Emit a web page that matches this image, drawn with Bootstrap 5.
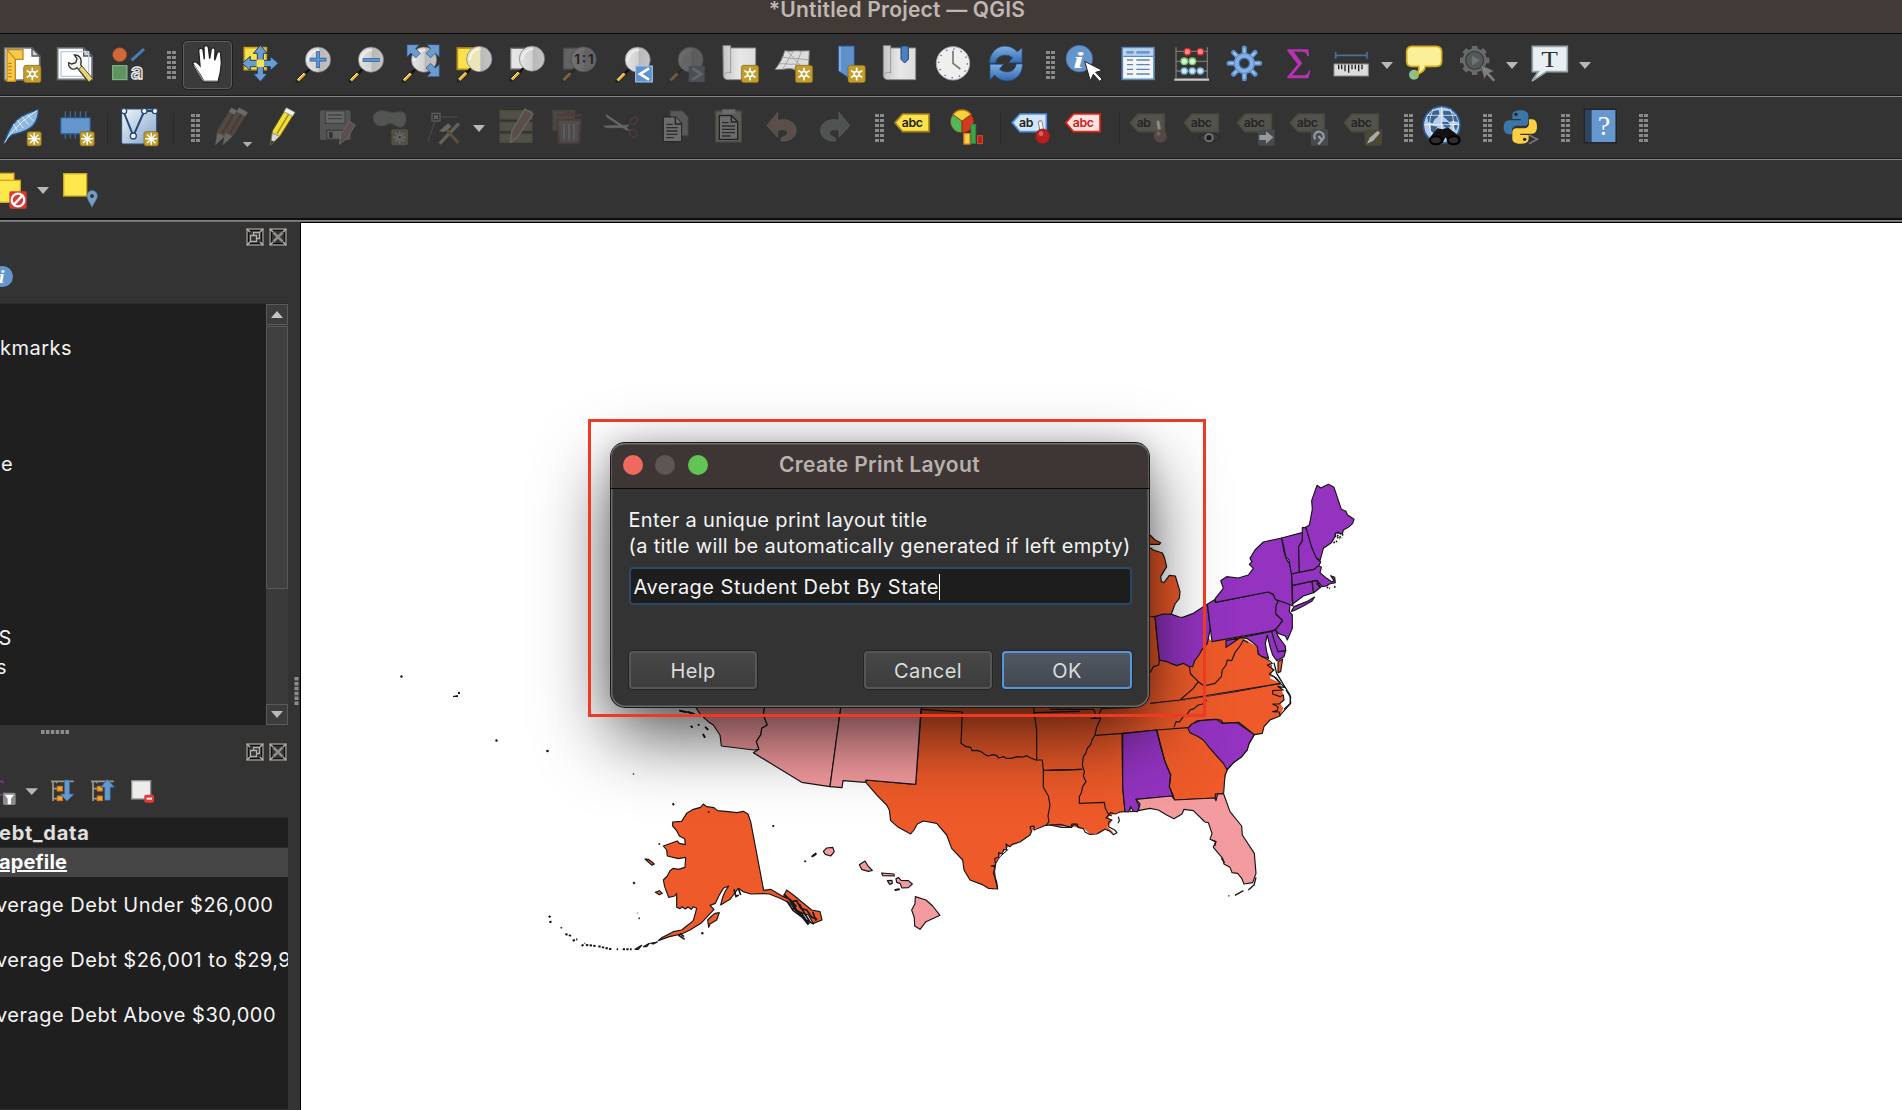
<!DOCTYPE html>
<html lang="en">
<head>
<meta charset="utf-8">
<title>*Untitled Project — QGIS</title>
<link href="https://cdn.jsdelivr.net/npm/bootstrap@5.3.0/dist/css/bootstrap.min.css" rel="stylesheet">
<script src="https://cdn.jsdelivr.net/npm/bootstrap@5.3.0/dist/js/bootstrap.bundle.min.js"></script>
<style>
  body{background:#333;color:#f4f4f4;font-family:Inter,"Liberation Sans",sans-serif;font-size:20px;width:1902px;height:1110px;overflow:hidden}
  .app-title{height:34px;background:#413a36;border-bottom:1px solid #0b0b0b;color:#c0b7b3;font-weight:600;font-size:21px;letter-spacing:.22px;line-height:20px;padding-right:108px}
  .tool-strip{height:63px;background:#333;border-bottom:1px solid #858585;box-shadow:inset 0 -1px #1c1c1c;overflow:hidden}
  .tool-strip.last-strip{height:62px;border-bottom:1px solid #6e6e6e;box-shadow:inset 0 -1px #858585,inset 0 -3px #0d0d0d}
  .slot{width:53.33px;flex:none;display:flex;justify-content:center;align-items:center;height:100%}
  .slot:first-child{margin-left:-4.7px}
  .slot>svg{width:40px;height:40px;overflow:visible;flex:none}
  .slot.active-tool{position:relative}
  .slot.active-tool::before{content:"";position:absolute;inset:7px 2px 7px 3px;border:1px solid #5c5c5c;border-radius:4px;background:#3b3b3b;outline:1px solid #1f1f1f}
  .slot.active-tool>svg{position:relative}
  .off{opacity:.3}
  .off.faint{opacity:.22}
  .grip-slot{width:25px;flex:none;padding-left:12px}
  .dots{width:10px;height:29px;background:repeating-linear-gradient(to bottom,transparent 0 3.4px,#333 3.4px 5px),repeating-linear-gradient(to right,#8a8a8a 0 3.6px,#333 3.6px 5.4px)}
  .sep-slot{width:12px;flex:none;display:flex;justify-content:center}
  .sep-slot i{width:1px;height:31px;background:#292929}
  .drop-slot{width:19px;flex:none;padding-left:2px}
  .drop-slot.wide-drop{margin-left:-12px;width:17px;padding-left:0}
  .tri{width:0;height:0;border:6.5px solid transparent;border-top:7px solid #b8b8b8;border-bottom:0}
  .tri.up{border-top:0;border-bottom:7px solid #c4c4c4}
  .side{width:300px;flex:none;background:#333}
  .map-pane{border-left:1px solid #000;border-top:1px solid #000;background:#fff}
  .tree{height:422px;background:#1f1f1f;width:288px;border-top:1px solid #292929}
  .tree-list{padding-top:30px}
  .tree-row{height:29px;line-height:29px;white-space:nowrap;letter-spacing:.5px}
  .scrollcol{width:22px;background:#3a3a3a}
  .sbtn{height:21px;border:1px solid #5a5a5a;background:#3c3c3c}
  .sthumb{height:263px;margin-top:1px;border:1.5px solid #585858;background:#404040}
  .dock-head{width:287px;gap:5px}
  .dock-first{padding-top:6px}
  .panel-btn{width:18px;height:18px}
  .info-row{height:57px;padding-top:20px}
  .layers{width:288px;height:292px;background:#1f1f1f;overflow:hidden;border-top:1px solid #2a2a2a;white-space:nowrap;letter-spacing:.5px}
  .layer-head{height:29px;line-height:30px;font-weight:700;color:#e0e0e0;letter-spacing:.75px}
  .layer-head.sel{background:#454545;color:#fff;height:30px;line-height:28px;border-top:1px solid #2b2b2b;letter-spacing:.15px}
  .layer-cls{height:55px;line-height:56px}
  .tuck{margin-left:-4px}
  .split-grip{margin-top:455px;margin-right:1px}
  .hl{position:absolute;left:588px;top:419px;width:618px;height:298px;border:3px solid #ee3a24;z-index:3}
  .dlg{position:absolute;left:611px;top:443px;width:538px;height:264px;border-radius:14px;background:#333;z-index:2;box-shadow:inset 0 0 0 1.5px #6c6a69,0 0 0 1px #1a1a1a,0 28px 72px rgba(0,0,0,.68),0 0 24px rgba(0,0,0,.16)}
  .dlg-title{height:46px;background:#3d3635;border-bottom:1px solid #0a0a0a;border-radius:14px 14px 0 0;box-shadow:inset 0 1.5px #74706f,inset 1px 0 #5c5857,inset -1px 0 #5c5857;padding:0 12px 1px;gap:12.300px}
  .dlg-title b{font-weight:600;color:#b9b1ae;font-size:21px;letter-spacing:.33px;padding-right:98px}
  .lamp{width:20px;height:20px;border-radius:50%}
  .lamp-r{background:#ee6a5f}.lamp-m{background:#5d5654}.lamp-g{background:#61c454}
  .dlg-body{padding:18px 17px 0 17.5px}
  .dlg-text{line-height:26px;letter-spacing:.34px;white-space:nowrap}
  .dlg-input{height:38px;margin-top:8px;background:#1d1d1d;border:2px solid #2d4766;border-radius:4px;padding:1px 0 0 3px;letter-spacing:.48px}
  .caret{width:1.5px;height:26px;background:#fff}
  .dlg-actions{margin-top:46px;gap:10px;padding-left:.5px}
  .dlg .btn{height:38px;width:128px;padding:0;border:2px solid #565656;border-radius:4px;background:linear-gradient(#474747,#3d3d3d);color:#dcdcdc;font-size:20px;letter-spacing:.4px;line-height:36px;box-shadow:0 0 0 1px #242424}
  .dlg .btn.ok-btn{background:linear-gradient(#525862,#424850);border-color:#5795df;width:130px}
  .icon-t{font-family:Inter,sans-serif;font-weight:600}
</style>
</head>
<body class="d-flex flex-column">
<svg width="0" height="0" class="position-absolute">
  <defs>
    <linearGradient id="gGlass"><stop offset="0" stop-color="#e4e4e4"/><stop offset=".5" stop-color="#d2d2d2"/><stop offset=".55" stop-color="#b9b9b9"/><stop offset="1" stop-color="#c4c4c4"/></linearGradient>
    <linearGradient id="gBlue" x2="0" y2="1"><stop offset="0" stop-color="#7fb0e2"/><stop offset="1" stop-color="#2f69b0"/></linearGradient>
    <linearGradient id="gVec" x2="1" y2="1"><stop offset="0" stop-color="#f4f7fb"/><stop offset="1" stop-color="#7ea2cc"/></linearGradient>
    <linearGradient id="gPage"><stop offset="0" stop-color="#c4c4c4"/><stop offset=".5" stop-color="#e8e8e8"/><stop offset="1" stop-color="#ddd"/></linearGradient>
    <g id="sun"><rect x="1" y="1" width="52" height="52" rx="7" fill="#c29d2c" stroke="#7c611a" stroke-width="2"/><path d="M27 10V44M12 18L42 36M42 18L12 36" stroke="#fff" stroke-width="5" stroke-linecap="round"/><circle cx="27" cy="27" r="10" fill="#fff"/><circle cx="27" cy="27" r="5" fill="#c29d2c"/></g>
    <g id="ast"><rect x="1" y="1" width="43" height="43" rx="6" fill="#c29d2c" stroke="#7c611a" stroke-width="2"/><path d="M22.500 6V39M6 22.500H39M11 11L34 34M34 11L11 34" stroke="#fff" stroke-width="4.500" stroke-linecap="round"/></g>
    <g id="lens"><path d="M-61 64L-38 41" stroke="#222" stroke-width="13" stroke-linecap="round"/><path d="M-60 63L-39 42" stroke="#f2b62b" stroke-width="8"/><path d="M-62 60L-42 40" stroke="#fff0b8" stroke-width="3"/><path d="M-36 39L-22 25" stroke="#111" stroke-width="7"/><circle r="38" fill="url(#gGlass)" stroke="#6d6d6d" stroke-width="2"/><path d="M-30 4C-28-18-12-28 4-30" fill="none" stroke="#f3f3f3" stroke-width="6" opacity=".8"/></g>
    <g id="tag"><path d="M2 28L25 2H104V55H25Z" stroke-width="5"/></g>
    <g id="pencil"><path d="M50 0L76 14L32 84L2 112L8 70Z" fill="#f0dc3c" stroke="#5b5210" stroke-width="2.500"/><path d="M58 18L22 78" stroke="#a59417" stroke-width="5"/><path d="M50 0L76 14L69 26L43 12Z" fill="#f3f3f3" stroke="#777" stroke-width="2"/><path d="M2 112L8 76L30 86Z" fill="#d9d9d9" stroke="#666" stroke-width="2"/><path d="M2 112L5 98L13 102Z" fill="#333"/></g>
    <g id="graypencil"><path d="M50 0L76 14L32 84L2 112L8 70Z" fill="#54483f" stroke="#444" stroke-width="2.500"/><path d="M58 18L22 78" stroke="#473c36" stroke-width="6"/><path d="M50 0L76 14L69 26L43 12Z" fill="#6b6b6b"/><path d="M2 112L8 76L30 86Z" fill="#666"/></g>
    <g id="dockbtns" fill="none"><rect x="1" y="1" width="16" height="16" stroke="#8f8984" stroke-width="1.500"/><rect x="2.500" y="2.500" width="13" height="13" stroke="#111" stroke-width="1"/><path d="M1 1L4 4M17 1L14 4M1 17L4 14M17 17L14 14" stroke="#bdb6b0" stroke-width="1.500"/></g>
  </defs>
</svg>

<header class="app-title text-center">*Untitled Project — QGIS</header>

<div class="tool-strip d-flex align-items-center">
  <span class="slot"><svg viewBox="6 135 120 120"><path d="M14 144H96L119 168V240H14Z" fill="#fff" stroke="#777" stroke-width="5"/><path d="M96 144V168H119Z" fill="#d2d2d2" stroke="#555" stroke-width="4"/><path d="M21 149H69V178H46V244H21Z" fill="#f6c94a" stroke="#c18a14" stroke-width="4"/><path d="M46 178L22 150M25 190H35M25 200H35M25 210H35M25 220H35M25 230H35" stroke="#a8770e" stroke-width="3"/><use href="#sun" x="70" y="195"/></svg></span>
  <span class="slot"><svg viewBox="166 135 120 120"><path d="M174 144H252L277 168V238H174Z" fill="#fff" stroke="#777" stroke-width="5"/><path d="M252 144V168H277Z" fill="#d2d2d2" stroke="#555" stroke-width="4"/><rect x="184" y="155" width="83" height="74" fill="none" stroke="#b9cdf0" stroke-width="4"/><path d="M207 188C205 206 222 212 232 203L262 240L274 240L243 194C248 178 240 164 224 165L232 176L228 188L216 192Z" fill="#f2f2f2" stroke="#333" stroke-width="4"/><path d="M237 207L247 198L279 236L268 246Z" fill="#ead47b" stroke="#66551c" stroke-width="3"/></svg></span>
  <span class="slot"><svg viewBox="326 135 120 120"><circle cx="358" cy="164" r="21" fill="#d0693a" stroke="#a8461b" stroke-width="2"/><path d="M394 181L431 147" stroke="#4a7db5" stroke-width="9"/><rect x="337" y="197" width="43" height="42" fill="#5d9460" stroke="#8cc08d" stroke-width="3"/><text x="391" y="238" font-size="66" class="icon-t" fill="#555" stroke="#e8e8e8" stroke-width="4" textLength="42">a</text></svg></span>
  <span class="grip-slot"><div class="dots"></div></span>
  <span class="slot active-tool"><svg viewBox="561 135 120 120"><path d="M612 246C604 226 586 205 578 190C582 182 590 184 600 197L596 150C600 142 607 144 609 150L613 178L612 141C616 134 623 136 625 142L629 176L634 147C638 141 645 143 645 150L644 181L652 158C657 152 664 156 662 164L664 190C663 212 660 226 654 246Z" fill="#fff" stroke="#222" stroke-width="4"/><path d="M582 196L610 242H652" fill="none" stroke="#aaa" stroke-width="3"/></svg></span>
  <span class="slot"><svg viewBox="721 135 120 120"><rect x="734" y="143" width="66" height="66" fill="#fbe24a" stroke="#cfa61c" stroke-width="5"/><path d="M782 136L803 160H791V181H812V169L836 190L812 212V200H791V221H803L782 245L761 221H773V200H752V212L728 190L752 169V181H773V160H761Z" fill="#6c9bd0" stroke="#1d3f68" stroke-width="3"/><rect x="771" y="179" width="22" height="22" fill="#fbe24a"/></svg></span>
  <span class="slot"><svg viewBox="881 135 120 120"><use href="#lens" x="953" y="179"/><path d="M953 154V204M928 179H978" stroke="#2c5c94" stroke-width="11"/><path d="M953 156V202M930 179H976" stroke="#5f95d0" stroke-width="7"/></svg></span>
  <span class="slot"><svg viewBox="1041 135 120 120"><use href="#lens" x="1113" y="179"/><path d="M1088 180H1139" stroke="#2c5c94" stroke-width="11"/><path d="M1090 180H1137" stroke="#5f95d0" stroke-width="7"/></svg></span>
  <span class="slot"><svg viewBox="1201 135 120 120"><use href="#lens" x="1273" y="179"/><g fill="#6c9bd0" stroke="#274e7e" stroke-width="2"><path d="M1222 134H1259L1248 146L1262 160L1248 174L1234 159L1222 171Z"/><path d="M1319 134V171L1307 160L1293 173L1279 160L1293 146L1282 134Z"/><path d="M1319 230H1282L1293 218L1279 204L1293 190L1307 204L1319 193Z"/></g></svg></span>
  <span class="slot"><svg viewBox="-49 135 120 120"><rect x="-39" y="144" width="60" height="64" fill="#fbe24a" stroke="#b58f18" stroke-width="5"/><use href="#lens" x="27" y="177"/><path d="M30 140A37 37 0 1 0 30 214Z" fill="#ece5b8"/><path d="M-2 180C0 160 12 150 26 147" fill="none" stroke="#fbf8e4" stroke-width="6"/></svg></span>
  <span class="slot"><svg viewBox="111 135 120 120"><rect x="122" y="145" width="52" height="62" fill="#e4e4e4" stroke="#777" stroke-width="4"/><use href="#lens" x="186" y="176"/></svg></span>
  <span class="slot"><svg viewBox="271 135 120 120"><g opacity=".35"><rect x="282" y="145" width="50" height="62" fill="#bbb" stroke="#888" stroke-width="4"/><use href="#lens" x="342" y="178"/></g><text x="314" y="193" font-size="41" class="icon-t" fill="#1f1f1f" textLength="58">1:1</text></svg></span>
  <span class="slot"><svg viewBox="431 135 120 120"><use href="#lens" x="502" y="179"/><rect x="496" y="198" width="50" height="48" fill="#5f93ce" stroke="#a9cbf0" stroke-width="3"/><path d="M536 205L509 222L536 239" fill="none" stroke="#fff" stroke-width="8"/></svg></span>
  <span class="slot off"><svg viewBox="591 135 120 120"><use href="#lens" x="662" y="179"/><rect x="656" y="198" width="48" height="48" fill="#7e92a2"/><path d="M667 205L694 222L667 239" fill="none" stroke="#ddd" stroke-width="8"/></svg></span>
  <span class="slot"><svg viewBox="751 135 120 120"><path d="M760 137H783V144H858V239H775C765 239 761 232 761 226Z" fill="url(#gPage)" stroke="#8b8b8b" stroke-width="3"/><path d="M783 144V220C778 214 768 216 762 226" fill="none" stroke="#999" stroke-width="3"/><use href="#sun" x="814" y="195"/></svg></span>
  <span class="slot"><svg viewBox="911 135 120 120"><path d="M943 152C960 156 975 150 990 153L1017 152L1014 226C1000 216 985 216 975 210C955 200 935 212 914 208C925 195 938 175 943 152Z" fill="#ddd" stroke="#777" stroke-width="3"/><path d="M934 172C950 170 965 180 975 175L1016 180M925 192C945 188 960 196 970 192L1015 204M968 154L938 206M993 154L972 210M950 153L1008 215" stroke="#a5a5a5" stroke-width="3" fill="none"/><use href="#sun" x="974" y="195"/></svg></span>
  <span class="slot"><svg viewBox="1071 135 120 120"><path d="M1105 138H1153V200L1140 236L1105 213Z" fill="#6090c9" stroke="#2a5488" stroke-width="3"/><path d="M1110 140V214" stroke="#9cc0e8" stroke-width="4"/><use href="#sun" x="1133" y="195"/></svg></span>
  <span class="slot"><svg viewBox="1231 135 120 120"><path d="M1241 137H1263V144H1338V239H1256C1245 239 1241 232 1241 226Z" fill="url(#gPage)" stroke="#8b8b8b" stroke-width="3"/><path d="M1263 144V220C1258 214 1248 216 1242 226" fill="none" stroke="#999" stroke-width="3"/><path d="M1294 138H1316V178L1305 189L1294 178Z" fill="#4b81bd" stroke="#1d4472" stroke-width="3"/></svg></span>
  <span class="slot"><svg viewBox="-19 135 120 120"><circle cx="38" cy="190" r="50" fill="#efefed" stroke="#aaa" stroke-width="3"/><circle cx="38" cy="190" r="43" fill="none" stroke="#3d6ca3" stroke-width="4" stroke-dasharray="4 18.500"/><path d="M38 152V190L60 207" fill="none" stroke="#777" stroke-width="5"/></svg></span>
  <span class="slot"><svg viewBox="141 135 120 120"><path d="M149 190C148 155 178 130 210 141C220 145 227 150 232 156L246 144V188H206L218 173C198 158 170 166 167 188Z" fill="url(#gBlue)" stroke="#265791" stroke-width="2"/><path d="M247 192C248 227 218 250 186 240C176 236 169 231 164 225L150 239V193H190L178 208C198 224 226 216 229 192Z" fill="url(#gBlue)" stroke="#265791" stroke-width="2"/></svg></span>
  <span class="grip-slot"><div class="dots"></div></span>
  <span class="slot"><svg viewBox="376 135 120 120"><circle cx="419" cy="176" r="40" fill="#6496cd" stroke="#3c6698" stroke-width="2"/><text x="401" y="204" font-size="72" font-family="Liberation Serif" font-style="italic" font-weight="700" fill="#fff" textLength="31" lengthAdjust="spacingAndGlyphs">i</text><path d="M435 184L488 211L468 217L487 237L480 244L461 223L452 242Z" fill="#fff" stroke="#222" stroke-width="3"/></svg></span>
  <span class="slot"><svg viewBox="538 135 120 120"><rect x="548" y="143" width="95" height="95" fill="#f3f5f7" stroke="#5a8ac0" stroke-width="5"/><rect x="551" y="146" width="89" height="21" fill="#b9d4ee"/><path d="M551 169H640" stroke="#5a8ac0" stroke-width="4"/><path d="M560 157H582M590 157H630" stroke="#6a9bd0" stroke-width="8"/><path d="M562 180H580M590 180H630M562 194H580M590 194H630M562 208H580M590 208H630M562 222H580M590 222H630" stroke="#5f86b0" stroke-width="4"/></svg></span>
  <span class="slot"><svg viewBox="696 135 120 120"><path d="M708 142V234M802 142V234M706 154H804M706 184H804M706 213H804" stroke="#777" stroke-width="4"/><path d="M703 239H807" stroke="#c9c9c9" stroke-width="7"/><g stroke-width="4"><g fill="#f48a8a" stroke="#cc2222"><circle cx="742" cy="155" r="10"/><circle cx="781" cy="155" r="10"/></g><g fill="#d5f5cf" stroke="#78c374"><circle cx="733" cy="184" r="10"/><circle cx="757" cy="184" r="10"/></g><g fill="#d5ecfa" stroke="#7fb4d8"><circle cx="733" cy="213" r="9"/><circle cx="757" cy="213" r="9"/><circle cx="781" cy="213" r="9"/></g></g></svg></span>
  <span class="slot"><svg viewBox="856 135 120 120"><path d="M914 144V236M868 190H960M881.500 157.500L946.500 222.500M946.500 157.500L881.500 222.500" stroke="#5d92d0" stroke-width="15" stroke-linecap="round"/><path d="M914 146V234M870 190H958M883 159L945 221M945 159L883 221" stroke="#a3c4ea" stroke-width="6" stroke-linecap="round"/><circle cx="914" cy="190" r="30" fill="#86b0e2" stroke="#5d92d0" stroke-width="4"/><circle cx="914" cy="190" r="15" fill="#333" stroke="#3a6ba5" stroke-width="4"/></svg></span>
  <span class="slot"><svg viewBox="1016 135 120 120"><path d="M1041 148H1104L1106 168H1101C1098 158 1094 155 1084 155H1060L1086 190L1056 226H1088C1099 226 1103 221 1106 211L1110 212L1104 235H1041V230L1072 193L1041 153Z" fill="#b732b5"/></svg></span>
  <span class="slot"><svg viewBox="1176 135 120 120"><path d="M1187 166H1281M1187 156V176M1281 156V176" stroke="#4d6f96" stroke-width="5"/><rect x="1182" y="192" width="103" height="36" fill="#dcdcdc" stroke="#8b8b8b" stroke-width="3"/><path d="M1196 194V208M1205 194V208M1215 194V214M1226 194V218M1236 194V208M1246 194V208M1256 194V214M1266 194V208" stroke="#222" stroke-width="4"/></svg></span>
  <span class="drop-slot"><div class="tri"></div></span>
  <span class="slot"><svg viewBox="12 135 120 120"><circle cx="42" cy="224" r="15" fill="#8cc08d"/><path d="M36 139H108Q125 139 125 156V182Q125 199 108 199H76C74 212 64 220 48 223C56 216 58 208 56 199H36Q20 199 20 182V156Q20 139 36 139Z" fill="#fbf09a" stroke="#d6aa1c" stroke-width="5"/></svg></span>
  <span class="slot"><svg viewBox="172 135 120 120"><g fill="#6f7376"><path d="M222 138V225M178 181H266M191 150L253 212M253 150L191 212" stroke="#6a6a6a" stroke-width="17"/><circle cx="222" cy="181" r="36" fill="#6a6a6a"/><circle cx="222" cy="181" r="27" fill="#54595c" stroke="#3b3f42" stroke-width="4"/><path d="M214 167L238 181L214 196Z"/><path d="M240 194L280 213L265 219L284 240L278 245L258 224L251 238Z" fill="#808080" stroke="#444" stroke-width="2"/></g></svg></span>
  <span class="drop-slot"><div class="tri"></div></span>
  <span class="slot"><svg viewBox="390 135 120 120"><path d="M397 139H502V215H440L396 243L415 215H397Z" fill="#e9eff2" stroke="#9aa5aa" stroke-width="5"/><text x="424" y="201" font-size="72" font-family="Liberation Serif" fill="#333" textLength="50" lengthAdjust="spacingAndGlyphs">T</text></svg></span>
  <span class="drop-slot"><div class="tri"></div></span>
</div>

<div class="tool-strip d-flex align-items-center">
  <span class="slot"><svg viewBox="6 324 120 120"><path d="M11 433C18 410 26 385 48 362C68 342 90 338 115 328C116 352 110 365 98 378C84 392 66 398 36 405C26 411 18 420 11 433Z" fill="#8fb6de" stroke="#1f4f85" stroke-width="4"/><path d="M14 428C32 395 70 358 112 331M40 372L52 392M52 360L70 384M66 350L86 374M82 344L100 362" stroke="#e3eef9" stroke-width="3" fill="none"/><use href="#ast" x="80" y="394"/></svg></span>
  <span class="slot"><svg viewBox="166 324 120 120"><path d="M197 334V416M212 334V416M227 334V416M242 334V416M258 334V416" stroke="#3f6798" stroke-width="4"/><rect x="183" y="353" width="89" height="49" rx="3" fill="#6496cd" stroke="#2d588b" stroke-width="4"/><use href="#ast" x="240" y="394"/></svg></span>
  <span class="sep-slot"><i></i></span>
  <span class="slot"><svg viewBox="365 324 120 120"><rect x="367" y="327" width="105" height="105" rx="5" fill="url(#gVec)" stroke="#2e4b70" stroke-width="3"/><path d="M372 333L402 408L435 333L466 333" fill="none" stroke="#28496f" stroke-width="6"/><g fill="#fff" stroke="#28496f" stroke-width="4"><circle cx="374" cy="333" r="8"/><circle cx="402" cy="408" r="9"/><circle cx="435" cy="333" r="8"/><circle cx="467" cy="333" r="8"/></g><use href="#ast" x="433" y="394"/></svg></span>
  <span class="sep-slot"><i></i></span>
  <span class="grip-slot"><div class="dots"></div></span>
  <span class="slot"><svg viewBox="633 324 120 120"><use href="#graypencil" x="644" y="323"/><use href="#graypencil" x="667" y="323"/><path d="M728 426H757L742 441Z" fill="#b0b0b0"/></svg></span>
  <span class="slot"><svg viewBox="793 324 120 120"><use href="#pencil" x="810" y="323"/></svg></span>
  <span class="slot off"><svg viewBox="953 324 120 120"><rect x="959" y="331" width="92" height="89" rx="5" fill="#a0a0a0"/><rect x="975" y="333" width="59" height="37" fill="#ddd" stroke="#555" stroke-width="3"/><path d="M983 345H1026M983 356H1026" stroke="#666" stroke-width="4"/><rect x="979" y="391" width="48" height="27" fill="#ccc" stroke="#555" stroke-width="4"/><rect x="986" y="396" width="11" height="18" fill="#333"/><path d="M1048 364L1065 375L1040 415L1017 433L1022 403Z" fill="#b58f80" stroke="#ddd" stroke-width="3"/></svg></span>
  <span class="slot off"><svg viewBox="1113 324 120 120"><path d="M1120 355C1120 335 1140 328 1160 334C1180 342 1195 332 1210 337C1222 345 1220 372 1208 380C1192 388 1180 366 1165 370C1150 384 1120 380 1120 355Z" fill="#9aa59a" stroke="#777" stroke-width="3"/><rect x="1174" y="388" width="50" height="48" rx="6" fill="#9c936c"/><path d="M1199 394V431M1180 412H1218M1186 399L1212 425M1212 399L1186 425" stroke="#ddd" stroke-width="5"/><circle cx="1199" cy="412" r="6" fill="#444" stroke="#ddd" stroke-width="4"/></svg></span>
  <span class="slot off"><svg viewBox="1273 324 120 120"><path d="M1325 351H1372M1306 364L1284 426" stroke="#777" stroke-width="4"/><rect x="1297" y="340" width="24" height="23" fill="none" stroke="#bbb" stroke-width="4"/><path d="M1303 346L1315 357M1315 346L1303 357" stroke="#ddd" stroke-width="5"/><path d="M1378 370L1320 431" stroke="#d8cba6" stroke-width="10"/><path d="M1336 384L1376 429" stroke="#b38d68" stroke-width="10"/><path d="M1318 394L1345 370L1356 380L1333 396Z" fill="#ddd"/></svg></span>
  <span class="drop-slot"><div class="tri"></div></span>
  <span class="slot off"><svg viewBox="80 324 120 120"><g fill="#9a987b" stroke="#888050" stroke-width="4"><rect x="89" y="332" width="96" height="25"/><rect x="89" y="367" width="96" height="25"/><rect x="89" y="402" width="96" height="25"/></g><path d="M164 327L188 342L141 412L121 427L124 395Z" fill="#b38d85" stroke="#ddd" stroke-width="4"/></svg></span>
  <span class="slot off faint"><svg viewBox="240 324 120 120"><rect x="249" y="332" width="65" height="58" fill="#9a987b" stroke="#888050" stroke-width="4"/><path d="M260 346H334M282 344Q298 330 312 344" stroke="#b34f4f" stroke-width="6" fill="none"/><path d="M262 359H332L327 430H267Z" fill="#aaa" stroke="#b34f4f" stroke-width="6"/><path d="M282 372V418M297 372V418M312 372V418" stroke="#eee" stroke-width="6"/></svg></span>
  <span class="slot off"><svg viewBox="400 324 120 120"><path d="M409 343L480 391L470 390L412 352ZM402 378L478 375L470 383L410 383Z" fill="#ddd" stroke="#ccc" stroke-width="2"/><g fill="none" stroke="#b35252" stroke-width="3.500"><ellipse cx="493" cy="363" rx="13" ry="9" transform="rotate(-40 493 363)"/><ellipse cx="491" cy="400" rx="13" ry="10" transform="rotate(55 491 400)"/></g></svg></span>
  <span class="slot"><svg viewBox="560 324 120 120"><path d="M600 333H636L653 351V407H600Z" fill="#585858" stroke="#484848" stroke-width="3"/><path d="M579 351H617L634 369V425H579Z" fill="#6c6c6c" stroke="#222" stroke-width="3"/><path d="M615 352V372H634" fill="none" stroke="#222" stroke-width="4"/><path d="M588 373H607M588 383H622M588 393H622M588 403H622M588 413H610" stroke="#2d2d2d" stroke-width="4"/></svg></span>
  <span class="slot"><svg viewBox="720 324 120 120"><rect x="737" y="333" width="77" height="93" fill="#5c5b56" stroke="#4a4943" stroke-width="4"/><rect x="756" y="328" width="40" height="13" fill="#6c6c6c"/><path d="M748 347H785L803 365V418H748Z" fill="#6c6c6c" stroke="#222" stroke-width="4"/><path d="M784 348V366H803" fill="none" stroke="#222" stroke-width="4"/><path d="M756 368H776M756 378H795M756 388H795M756 398H795M756 408H782" stroke="#2d2d2d" stroke-width="4"/></svg></span>
  <span class="slot off"><svg viewBox="880 324 120 120"><path d="M892 377L924 337V361C966 351 988 380 976 404C968 420 948 425 934 422C932 409 946 413 952 403C957 394 948 386 924 391V412Z" fill="#b58d80" stroke="#ccc" stroke-width="2"/></svg></span>
  <span class="slot off"><svg viewBox="1040 324 120 120"><path d="M1138 377L1106 337V361C1064 351 1042 380 1054 404C1062 420 1082 425 1096 422C1098 409 1084 413 1078 403C1073 394 1082 386 1106 391V412Z" fill="#8d9d96" stroke="#ccc" stroke-width="2"/></svg></span>
  <span class="grip-slot"><div class="dots"></div></span>
  <span class="slot"><svg viewBox="1275 324 120 120"><use href="#tag" x="1273" y="340" fill="#fbe24a" stroke="#a9821a"/><text x="1295" y="381" font-size="37" class="icon-t" fill="#222" textLength="64">abc</text></svg></span>
  <span class="slot"><svg viewBox="25 324 120 120"><g stroke="#7a2b12" stroke-width="2"><path d="M67 364L40 344A33 33 0 0 1 94 344Z" fill="#fbd23a" stroke="#c27d12" stroke-width="4"/><path d="M67 364L40 344A33 33 0 0 0 67 398Z" fill="#52b857"/><path d="M67 364L94 344A33 33 0 0 1 67 398Z" fill="#d33820"/></g><rect x="73" y="401" width="18" height="31" fill="#fbcf4a" stroke="#e08a1a" stroke-width="4"/><rect x="94" y="373" width="14" height="57" fill="#3da350" stroke="#2a8b3c" stroke-width="3"/><rect x="114" y="407" width="14" height="24" fill="#b02314" stroke="#e04a30" stroke-width="3"/></svg></span>
  <span class="sep-slot"><i></i></span>
  <span class="slot"><svg viewBox="221 324 120 120"><use href="#tag" x="214" y="340" fill="#d5e6fa" stroke="#4a90e8"/><text x="236" y="381" font-size="37" class="icon-t" fill="#222" textLength="43">ab</text><path d="M300 368L305 396" stroke="#777" stroke-width="14" stroke-linecap="round"/><path d="M300 368L305 394" stroke="#f2f2f2" stroke-width="9" stroke-linecap="round"/><circle cx="307" cy="409" r="22" fill="#b32222" stroke="#7c1414" stroke-width="2"/><circle cx="302" cy="401" r="7" fill="#e35f5f"/></svg></span>
  <span class="slot"><svg viewBox="381 324 120 120"><use href="#tag" x="376" y="340" fill="#fde3e1" stroke="#f01f10"/><text x="398" y="381" font-size="37" class="icon-t" fill="#c9241b" textLength="64">abc</text></svg></span>
  <span class="sep-slot"><i></i></span>
  <span class="slot"><svg viewBox="577 324 120 120"><use href="#tag" x="570" y="340" fill="#54534b" stroke="#4a4940"/><text x="591" y="381" font-size="37" class="icon-t" fill="#262626" textLength="43">ab</text><path d="M655 366L660 394" stroke="#888" stroke-width="9" stroke-linecap="round"/><circle cx="662" cy="408" r="20" fill="#564747"/><circle cx="656" cy="401" r="6" fill="#706060"/></svg></span>
  <span class="slot"><svg viewBox="737 324 120 120"><use href="#tag" x="730" y="340" fill="#54534b" stroke="#4a4940"/><text x="751" y="381" font-size="37" class="icon-t" fill="#262626" textLength="64">abc</text><path d="M774 414Q806 386 840 412Q806 440 774 414Z" fill="#383838" stroke="#272727" stroke-width="3"/><circle cx="806" cy="413" r="14" fill="#6d7276"/><circle cx="806" cy="413" r="8" fill="#1d1d1d"/></svg></span>
  <span class="slot"><svg viewBox="897 324 120 120"><use href="#tag" x="890" y="340" fill="#54534b" stroke="#4a4940"/><text x="911" y="381" font-size="37" class="icon-t" fill="#262626" textLength="64">abc</text><rect x="954" y="388" width="50" height="49" rx="5" fill="#444b50"/><path d="M958 405H978V394L1000 412L978 431V420H958Z" fill="#999"/></svg></span>
  <span class="slot"><svg viewBox="1057 324 120 120"><use href="#tag" x="1050" y="340" fill="#54534b" stroke="#4a4940"/><text x="1071" y="381" font-size="37" class="icon-t" fill="#262626" textLength="64">abc</text><rect x="1114" y="388" width="51" height="49" rx="5" fill="#444b50"/><path d="M1127 418A14 14 0 1 1 1147 420M1136 408L1147 420L1136 433" fill="none" stroke="#999" stroke-width="7"/></svg></span>
  <span class="slot"><svg viewBox="1217 324 120 120"><use href="#tag" x="1210" y="340" fill="#54534b" stroke="#4a4940"/><text x="1231" y="381" font-size="37" class="icon-t" fill="#262626" textLength="64">abc</text><rect x="1273" y="388" width="52" height="49" rx="5" fill="#4b4936"/><path d="M1280 431L1288 413L1312 392L1319 399L1298 423Z" fill="#aaa"/></svg></span>
  <span class="grip-slot"><div class="dots"></div></span>
  <span class="slot"><svg viewBox="72 324 120 120"><circle cx="125" cy="375" r="55" fill="#b5cdea" stroke="#2f5d96" stroke-width="5"/><path d="M82 350L96 334L116 330L118 342L112 352L104 358L98 370L84 366ZM92 376L112 380L106 392L102 400L92 392ZM130 332L150 334L168 348L174 366L158 362L148 366L138 356L130 350ZM126 366L144 366L152 378L142 386L130 378ZM160 376L174 374L168 392Z" fill="#3c6294"/><path d="M72 374H178M80 346H170M125 320V410M100 326Q78 374 98 410M150 326Q172 374 152 410" stroke="#fff" stroke-width="3" fill="none" opacity=".7"/><path d="M88 415L112 385L128 388L136 385L146 384L182 412L176 432L150 432L136 412L128 430L96 432Z" fill="#111"/><ellipse cx="108" cy="421" rx="18" ry="12" fill="#2e2e2e" stroke="#000" stroke-width="6"/><ellipse cx="161" cy="421" rx="18" ry="12" fill="#2e2e2e" stroke="#000" stroke-width="6"/></svg></span>
  <span class="grip-slot"><div class="dots"></div></span>
  <span class="slot"><svg viewBox="307 324 120 120"><path d="M361 331C344 331 338 338 338 346V357H363V361H328C316 361 312 372 312 382C312 394 317 403 328 403H337V391C337 383 343 377 351 377H375C382 377 386 372 386 365V346C386 336 378 331 361 331Z" fill="#3b76a8"/><path d="M364 431C381 431 387 424 387 416V405H362V401H397C408 401 412 391 412 380C412 368 408 358 397 358H388V371C388 379 382 385 374 385H350C343 385 338 390 338 397V416C338 426 347 431 364 431Z" fill="#fdd044"/><circle cx="349" cy="343" r="5" fill="#1f1f1f"/><circle cx="375" cy="418" r="5" fill="#1f1f1f"/><path d="M388 405L413 418L388 431" fill="none" stroke="#777" stroke-width="5"/></svg></span>
  <span class="grip-slot"><div class="dots"></div></span>
  <span class="slot"><svg viewBox="542 324 120 120"><rect x="552" y="328" width="95" height="100" fill="#6698d0" stroke="#161616" stroke-width="3"/><rect x="554" y="330" width="20" height="96" fill="#2d4560"/><text x="592" y="404" font-size="84" font-family="Liberation Serif" fill="#fff">?</text></svg></span>
  <span class="grip-slot"><div class="dots"></div></span>
</div>

<div class="tool-strip last-strip d-flex align-items-center">
  <span class="slot"><svg viewBox="6 513 120 120"><rect x="-30" y="520" width="72" height="66" fill="#fbe24a" stroke="#cfa61c" stroke-width="4"/><rect x="-30" y="541" width="91" height="66" fill="#fde94e" stroke="#cfa61c" stroke-width="4"/><rect x="28" y="574" width="52" height="52" rx="5" fill="#d93b32"/><circle cx="54" cy="600" r="19" fill="none" stroke="#fff" stroke-width="7"/><path d="M42 613L67 587" stroke="#fff" stroke-width="7"/></svg></span>
  <span class="drop-slot wide-drop"><div class="tri"></div></span>
  <span class="slot"><svg viewBox="180 511 120 120"><rect x="191" y="519" width="69" height="67" fill="#fde94e" stroke="#cfa61c" stroke-width="4"/><path d="M276 620C268 602 261 596 261 585A15.500 15.500 0 0 1 292 585C292 596 284 602 276 620Z" fill="#76a0bf" stroke="#4d7792" stroke-width="2"/><circle cx="276" cy="586" r="6" fill="#2f3a42"/></svg></span>
</div>

<main class="d-flex flex-grow-1 position-relative overflow-hidden">
  <aside class="side d-flex">
    <div class="flex-grow-1">
      <div class="dock-head dock-first d-flex justify-content-end">
        <svg class="panel-btn" viewBox="0 0 18 18"><use href="#dockbtns"/><path d="M4.500 7.500H10.500V13.500H4.500ZM7.500 7V4.500H13.500V10.500H11" fill="none" stroke="#b5afa9" stroke-width="1.300"/></svg>
        <svg class="panel-btn" viewBox="0 0 18 18"><use href="#dockbtns"/><path d="M4.500 4.500L13.500 13.500M13.500 4.500L4.500 13.500" stroke="#8f8b88" stroke-width="2.500"/></svg>
      </div>
      <div class="info-row"><svg width="14" height="22" viewBox="0 0 14 22" class="d-block"><circle cx="2.500" cy="10.500" r="10.500" fill="#6496cd"/><text x="-1" y="17" font-family="Liberation Serif" font-style="italic" font-weight="700" font-size="19" fill="#fff">i</text></svg></div>
      <div class="tree d-flex">
        <div class="tree-list flex-grow-1 overflow-hidden">
          <div class="tree-row">kmarks</div><div class="tree-row"></div><div class="tree-row"></div><div class="tree-row"></div>
          <div class="tree-row"><span style="margin-left:1px">e</span></div><div class="tree-row"></div><div class="tree-row"></div><div class="tree-row"></div><div class="tree-row"></div><div class="tree-row"></div>
          <div class="tree-row"><span style="margin-left:-1.5px">S</span></div><div class="tree-row"><span class="tuck">s</span></div>
        </div>
        <div class="scrollcol d-flex flex-column">
          <div class="sbtn d-flex justify-content-center align-items-center"><div class="tri up"></div></div>
          <div class="sthumb"></div>
          <div class="sbtn mt-auto d-flex justify-content-center align-items-center"><div class="tri"></div></div>
        </div>
      </div>
      <svg width="288" height="18" class="d-block"><path d="M41 7H70" stroke="#8d8d8d" stroke-width="4" stroke-dasharray="3.500 1.400"/></svg>
      <div class="dock-head d-flex justify-content-end">
        <svg class="panel-btn" viewBox="0 0 18 18"><use href="#dockbtns"/><path d="M4.500 7.500H10.500V13.500H4.500ZM7.500 7V4.500H13.500V10.500H11" fill="none" stroke="#b5afa9" stroke-width="1.300"/></svg>
        <svg class="panel-btn" viewBox="0 0 18 18"><use href="#dockbtns"/><path d="M4.500 4.500L13.500 13.500M13.500 4.500L4.500 13.500" stroke="#8f8b88" stroke-width="2.500"/></svg>
      </div>
      <svg class="d-block" width="180" height="56" viewBox="0 183 540 168">
        <path d="M0 246Q8 240 10 250M0 285Q12 285 12 276" fill="none" stroke="#7a3d8a" stroke-width="5"/><rect x="9" y="278" width="38" height="37" rx="5" fill="#8b8b8b"/><path d="M14 284H42L33 296V313H23V296Z" fill="#fff"/>
        <path d="M76 265H114L95 285Z" fill="#b8b8b8"/>
        <g id="treeic"><path d="M153 244H221M159 244V303M170 244V250M160 266H172M160 296H172" stroke="#9a9a8a" stroke-width="5" fill="none"/><rect x="172" y="259" width="15" height="14" fill="#f5a623" stroke="#d9771a" stroke-width="3"/><rect x="172" y="288" width="15" height="14" fill="#f5a623" stroke="#d9771a" stroke-width="3"/></g>
        <path d="M193 240H209V282H222L201 304L181 282H193Z" fill="#6698d0" stroke="#2f5c90" stroke-width="2"/>
        <use href="#treeic" x="120"/><path d="M314 301H331V262H344L322 238L302 262H314Z" fill="#6698d0" stroke="#2f5c90" stroke-width="2"/>
        <rect x="395" y="242" width="57" height="55" fill="#ececea" stroke="#8d8d85" stroke-width="4"/><rect x="433" y="284" width="29" height="24" rx="5" fill="#e5383b"/><path d="M440 296H456" stroke="#fff" stroke-width="6"/>
      </svg>
      <div class="layers">
        <div class="layer-head"><span style="margin-left:-1px">ebt_data</span></div>
        <div class="layer-head sel"><span class="text-decoration-underline" style="margin-left:-1px">apefile</span></div>
        <div class="layer-cls"><span class="tuck">verage Debt Under $26,000</span></div>
        <div class="layer-cls"><span class="tuck">verage Debt $26,001 to $29,9</span></div>
        <div class="layer-cls"><span class="tuck">verage Debt Above $30,000</span></div>
      </div>
    </div>
    <svg width="5" height="30" class="split-grip flex-shrink-0"><path d="M2.500 0V29" stroke="#8d8d8d" stroke-width="4" stroke-dasharray="3.500 1.400"/></svg>
  </aside>

  <section class="map-pane flex-grow-1 overflow-hidden">
    <svg class="d-block" width="1601" height="887" viewBox="301 223 1601 887" stroke-linejoin="round">
      <!-- Fill shared by the south-eastern states -->
      <g transform="translate(1050 640) scale(.33333)" fill="#ee5a29"><path d="M-40 0V555L0 555L30 560L75 553L90 562L105 568L120 583L150 580L165 568L195 582L172 560L185 545L175 530L200 518L225 515L240 500L268 512L260 478L374 480L496 478L521 460L523 425L533 388L590 330L613 284L637 280L642 260L660 240L690 228L700 205L690 190L702 180L700 165L690 130L600 100L450 0Z"/></g>
      <!-- Great Plains, Texas and the south-west -->
      <g transform="translate(680 690) scale(.33333)" stroke="#161616" stroke-width="3.500" fill="#ee5a29">
        <path stroke="none" d="M724 0V57L707 283L556 270L560 280L592 317L620 345L628 360L632 392L655 412L692 432L702 420L712 402L730 393L770 400L800 435L815 475L848 510L852 540L870 570L905 583L925 595L953 597L950 575L944 545L945 530L960 495L985 470L1010 462L1050 435L1060 418L1097 406L1140 403L1220 418V0Z"/>
        <path fill="none" d="M724 0V57L707 283L556 270L560 280L592 317L620 345L628 360L632 392L655 412L692 432L702 420L712 402L730 393L770 400L800 435L815 475L848 510L852 540L870 570L905 583L925 595L953 597L950 575L940 550L945 530L933 528L947 525L944 506L956 500V488L966 492L972 478L980 480L978 462L990 470L998 462L1020 456L1050 435L1054 425L1050 410L1062 408L1062 420L1097 406L1140 403L1175 412L1182 402L1196 410"/>
        <path fill="none" stroke-width="3" d="M953 597L946 570L944 545L947 520L960 500L985 478"/>
        <path fill="none" d="M724 58L847 66L843 160L858 170L872 172L876 182L892 181L905 186L915 194L925 198L938 194L950 196L955 204L972 200L978 205L993 205L1012 200L1030 201L1040 197L1052 204L1068 210H1087L1090 240V292L1105 318L1110 345L1104 378L1107 395L1097 408M1060 50L1070 120V212M1060 68L1200 64M1090 241L1205 238"/>
        <g fill="#f49b9f"><path d="M40 40L60 72L85 95L100 105L120 135L124 168L222 180L237 178L229 155L243 133L245 115L262 105L250 75L255 40Z"/><path d="M255 40L250 75L262 105L245 115L243 133L229 155L237 178L220 188L365 277L450 290L484 40Z"/><path d="M484 40L450 290L486 293L489 272L556 277L558 270L707 283L724 40Z"/>
        <path d="M430 484L440 474L458 472L463 485L452 498L436 493Z"/><path d="M538 524L555 513L564 528L577 541L565 544L545 538Z"/><path d="M605 549L642 552L643 558L608 557Z"/><path d="M622 572L636 571L637 580L629 583Z"/><path d="M648 566L656 563L663 571L685 572L697 582L685 593L666 594L660 580L650 577Z"/><path d="M706 620L738 630L758 648L780 676L738 695L720 718L704 708L703 683L695 660L705 641Z"/></g>
        <path d="M397 499L407 491M646 600L657 598M0 62L18 66M24 66L42 72M34 109L36 111M77 112L83 118M70 134L74 141M56 104V105" stroke-width="6" stroke-linecap="round"/><circle cx="280" cy="408" r="1"/><circle cx="376" cy="514" r="1"/>
      </g>
      <!-- South-east -->
      <g transform="translate(1050 640) scale(.33333)" stroke="#161616" stroke-width="3.500" fill="#ee5a29">
        <path fill="none" d="M0 555L35 562L62 562L66 552L82 552L84 562L100 566L106 577L118 583L140 582L150 576L165 568L180 574L190 584L201 578L194 570L176 560L176 546L186 540L168 534L182 518L196 522L210 516L225 515L240 512L240 500M205 530L208 542L204 550"/>
        <path fill="none" d="M0 208H130L135 216L134 235M155 205L148 220L152 236L140 262L135 285L126 300L122 314L112 325L107 340L100 350L97 375L103 395L100 408L108 425L98 440L94 458L88 470V490L163 487L166 505L175 522L185 528M0 391L97 388M122 235H152M155 205L240 203M137 286L216 280L320 270L414 263L440 243L490 238L513 240L520 250L567 247L613 284M372 262L378 245L388 246L400 230L412 222L420 210L432 206L445 195L458 192L470 180M240 192L385 182L560 154L692 130M216 280L218 440L225 515"/>
        <path fill="none" d="M640 45L650 68L665 78L650 80L668 90L655 104L672 110L690 130L705 142L684 140L700 150L668 152V162L690 170L700 165L702 180L688 192L668 192L684 200L682 212L668 215L688 216L690 228L660 240L642 260L637 280L613 284L597 310L590 330L575 350L550 368L533 388L525 405L521 460M708 150L722 172L720 192L690 226"/>
        <g fill="#9333c0"><path d="M218 281L320 270L332 320L345 365L362 405L358 440L370 468L258 478L268 500L262 515L250 514L242 500L236 516L225 515L218 440Z"/><path d="M414 265L425 252L450 242L500 238L516 250L562 248L613 284L597 310L592 330L575 350L550 368L531 389L520 370L500 348L480 325L460 300L445 290L420 278Z"/></g>
        <path fill="none" d="M320 270L345 365L362 405L358 440L374 480L496 474V462L521 460"/>
        <path fill="#f49b9f" d="M258 478L365 468L374 480L494 474L498 482L503 462L521 462L540 515L575 558L577 585L613 640L618 700L608 728L582 732L575 715L563 700L546 698L540 682L522 672L518 655L490 622L497 605L480 598L486 580L475 548L465 546L430 512L402 508L396 522L372 536L350 525L325 510L300 505L265 512L270 492Z"/>
        <path fill="none" stroke-width="4" d="M618 712L612 735L595 750M580 752L555 766M535 767L538 768M486 600L498 605L494 618M514 655L524 668M240 515L254 514"/>
      </g>
      <!-- North-east -->
      <g transform="translate(1130 470) scale(.33333)" stroke="#161616" stroke-width="3.500" fill="#ee5a29">
        <path d="M0 190L60 195L75 210L92 218L88 223L60 223L0 223Z"/><path d="M0 236L62 234L70 240L97 249L103 262L110 290L92 320L94 335L102 338L118 316L136 318L150 365L148 385L135 402L124 432L75 440L0 445Z"/>
        <path stroke="none" d="M0 440H75L232 500L246 515L330 500L382 530L385 552L420 575L428 600L420 625L452 640L0 720Z"/>
        <path fill="none" d="M62 440L75 440L88 570L86 585L70 590L60 608M178 592L182 612L205 635L190 655L150 690M205 635L222 648L255 640L274 620L277 600L288 585L292 570L305 572L315 548L332 525L340 510L355 518M60 700L150 690L330 660L452 640M382 530L385 552L418 572L427 580L412 585L432 600L418 612L440 625L452 640"/>
        <path d="M444 575L458 567L452 605L444 608Z"/>
        <g fill="#9333c0"><path d="M75 440L100 432L125 433L148 441L158 442L190 430L220 410L232 403L241 475L238 490L232 520L215 540L207 555L194 572L188 590L178 590L160 580L140 587L122 580L110 575L88 570Z"/>
        <path d="M288 512L428 484L435 505L445 545L467 542L462 560L440 572L428 555L420 530L412 495L406 520L410 545L416 565L395 560L385 552L382 530L365 515L350 505L330 503L306 520L288 532Z"/>
        <path d="M425 484L437 480L445 500L466 528L467 542L444 545L432 510Z"/>
        <path d="M232 403L256 388L256 397L414 366L430 374L436 388L446 394L438 410L437 432L458 452L440 475L428 482L246 515L241 475Z"/>
        <path d="M446 390L480 402L478 425L487 435L487 475L472 510L466 498L445 490L437 480L458 452L437 430L438 408Z"/>
        <path d="M256 397V385L280 355L272 332L290 320L325 324L355 315L370 295L358 283L366 275L360 265L375 240L400 216L455 204L462 245L470 270L479 280L485 312L487 392L489 408L475 402L436 388L430 372L414 366Z"/>
        <path d="M484 424L492 410L530 395L554 381L545 394L520 408L496 420Z"/>
        <path d="M455 204L519 187L517 213L507 228L508 306L484 312L477 270L468 262L460 225Z"/>
        <path d="M517 173L528 172L545 220L560 265L572 276L566 288L553 298L508 307L506 230L517 213Z"/>
        <path d="M485 312L553 298L566 287L574 292L570 308L590 325L605 335L612 332L602 317L614 322L616 338L598 342L590 348L576 350L562 332L545 334L487 347Z"/>
        <path d="M487 347L546 334L551 368L520 378L488 402Z"/><path d="M546 334L560 332L572 352L551 368Z"/>
        <path d="M561 46L572 54L595 43L612 52L634 118L648 124L652 134L672 148L668 160L655 172L640 180L637 192L618 188L612 205L604 218L590 228L580 235L576 250L570 272L558 262L545 232L528 172L538 165L547 118L545 92Z"/></g>
        <path fill="none" stroke-width="5" stroke-dasharray="5 3" d="M614 192L636 204M614 198L630 206M622 186L640 196M590 352L600 355M612 350L618 352M560 340L570 352M610 218L622 214"/><path fill="none" stroke-width="4" d="M432 578L440 610L458 640L480 675L482 700L462 718"/>
      </g>
      <!-- Alaska -->
      <g transform="translate(530 780) scale(.33333)" stroke="#161616" stroke-width="3.500" fill="#ee5a29">
        <path d="M428 126L455 124L470 100L490 88L512 82L520 72L530 80L552 83L562 92L595 95L620 98L640 94L654 102L662 125L701 331L722 328L760 350L770 330L790 345L845 390L870 395L876 420L850 430L835 405L800 395L780 370L750 355L718 342L700 341L662 342L640 335L625 325L612 342L600 358L572 375L578 352L585 335L596 318L580 325L568 345L556 370L540 376L552 388L515 428L480 450L455 462L418 470L385 482L395 473L430 455L455 450L470 438L490 422L500 385L490 380L484 388L474 381L466 387L456 380L450 386L440 382V340L434 348L416 352L404 320L400 300L412 288L420 272L430 265L445 268L465 262L467 232L445 236L412 228L410 210L400 198L442 183L448 190L466 194L464 176L448 168L440 152L428 138Z"/>
        <path d="M533 420L545 408L555 400L568 398L560 420L540 432L536 442Z"/><path d="M345 237L355 238L373 252L366 256Z"/><path d="M376 337L388 332L397 340L388 344Z"/>
        <path d="M315 508L335 496L325 508ZM340 500L358 490L350 500ZM362 490L382 486L370 492Z"/>
        <path d="M762 342L785 365L800 362L812 385L830 390L845 412L862 418M762 350L780 358L798 378L790 385L815 400L828 420L852 432M775 355L800 390L835 434M770 362L790 392L812 408L838 432M808 372L822 398L842 428M848 395L858 422M612 328L618 350L626 345M445 465L464 478M450 460L462 470M625 325L632 345" stroke-width="5" fill="none"/>
        <path d="M155 498L165 490M168 495L200 498M205 499L245 508M260 508H264M278 508H305M106 462L124 468M128 482L142 478M56 408L62 412M58 427L66 424M310 306L316 314M322 399L323 400M326 414L329 416M428 70L433 78" stroke-width="6" fill="none" stroke-dasharray="7 4"/>
        <path d="M850 228L858 221" stroke-width="6"/><circle cx="730" cy="138" r="1"/><circle cx="825" cy="244" r="1"/><circle cx="517" cy="460" r="2"/><circle cx="388" cy="192" r="1"/><circle cx="536" cy="96" r="1"/><circle cx="94" cy="443" r="1"/>
      </g>
      <g fill="#161616"><circle cx="401.500" cy="676.500" r="1.200"/><path d="M453 696L458 695V697H453ZM458 692H460V694H458Z"/><circle cx="496.500" cy="740.500" r="1.200"/><circle cx="547.500" cy="751" r="1.300"/><circle cx="633.500" cy="774" r=".8"/></g>
    </svg>
  </section>
</main>

<div class="dlg">
  <div class="dlg-title d-flex align-items-center">
    <span class="lamp lamp-r"></span><span class="lamp lamp-m"></span><span class="lamp lamp-g"></span>
    <b class="flex-grow-1 text-center">Create Print Layout</b>
  </div>
  <div class="dlg-body">
    <div class="dlg-text">Enter a unique print layout title<br>(a title will be automatically generated if left empty)</div>
    <div class="dlg-input d-flex align-items-center"><span>Average Student Debt By State</span><span class="caret"></span></div>
    <div class="dlg-actions d-flex">
      <button class="btn">Help</button><button class="btn ms-auto">Cancel</button><button class="btn ok-btn">OK</button>
    </div>
  </div>
</div>
<div class="hl"></div>
</body>
</html>
